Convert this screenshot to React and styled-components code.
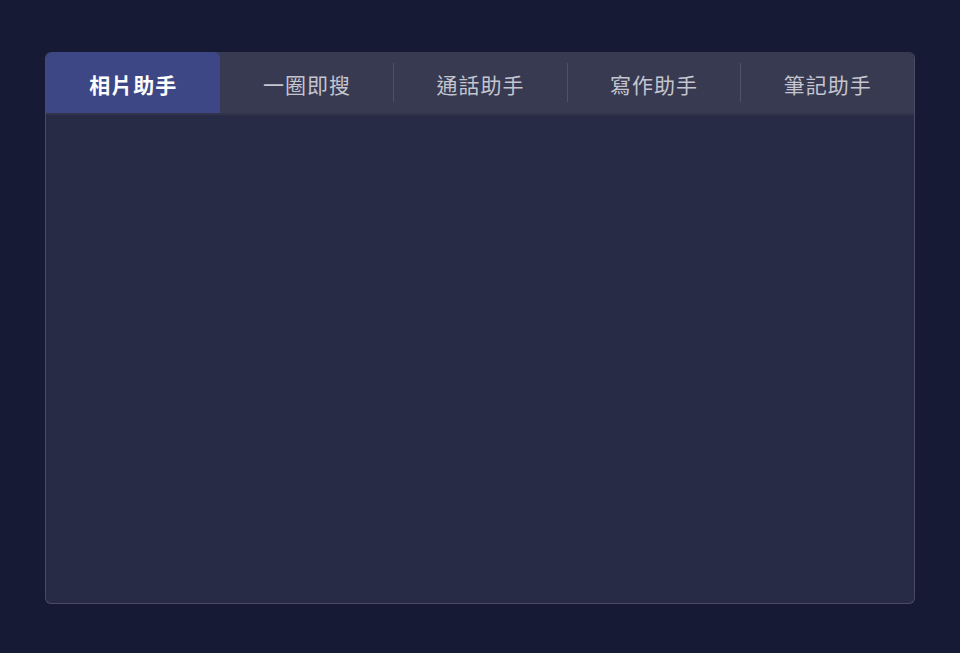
import React, { useState } from "react";
import styled, { createGlobalStyle } from "styled-components";

const GlobalStyle = createGlobalStyle`
  html, body {
    margin: 0;
    padding: 0;
    background: #161a35;
    font-family: "Noto Sans CJK TC", "Noto Sans", sans-serif;
  }
`;

const Page = styled.div`
  width: 960px;
  height: 653px;
  box-sizing: border-box;
  padding: 52px 45px 50px 45px;
  background: #161a35;
`;

const Card = styled.div`
  height: 100%;
  display: flex;
  flex-direction: column;
  background: #282b45;
  border: 1px solid #484b63;
  border-top: none;
  border-radius: 6px;
  overflow: hidden;
`;

const TabBar = styled.div`
  display: grid;
  grid-template-columns: repeat(5, 1fr);
  height: 61px;
  background: #383a51;
  border-radius: 6px 6px 0 0;
  border-bottom: 2px solid #32344d;
`;

const Tab = styled.button`
  position: relative;
  border: none;
  margin: 0;
  padding: 3px 0 0 1px;
  background: ${(p) => (p.$active ? "#3d4785" : "transparent")};
  border-radius: ${(p) => (p.$active ? "6px 6px 0 0" : "0")};
  color: ${(p) => (p.$active ? "#ffffff" : "#c4c5cf")};
  font-family: "Noto Sans CJK TC", "Noto Sans", sans-serif;
  font-size: 21px;
  font-weight: ${(p) => (p.$active ? 700 : 400)};
  letter-spacing: 1px;
  cursor: pointer;

  &::before {
    content: "";
    display: ${(p) => (p.$divider ? "block" : "none")};
    position: absolute;
    left: 0;
    top: 11px;
    bottom: 11px;
    width: 1px;
    background: #4f5168;
  }
`;

const Body = styled.div`
  flex: 1;
`;

const tabs = ["相片助手", "一圈即搜", "通話助手", "寫作助手", "筆記助手"];

const App = () => {
  const [active, setActive] = useState(0);

  return (
    <Page>
      <GlobalStyle />
      <Card>
        <TabBar>
          {tabs.map((t, i) => (
            <Tab
              key={t}
              $active={i === active}
              $divider={i > 1 && i !== active && i - 1 !== active}
              onClick={() => setActive(i)}
            >
              {t}
            </Tab>
          ))}
        </TabBar>
        <Body />
      </Card>
    </Page>
  );
};

export default App;
